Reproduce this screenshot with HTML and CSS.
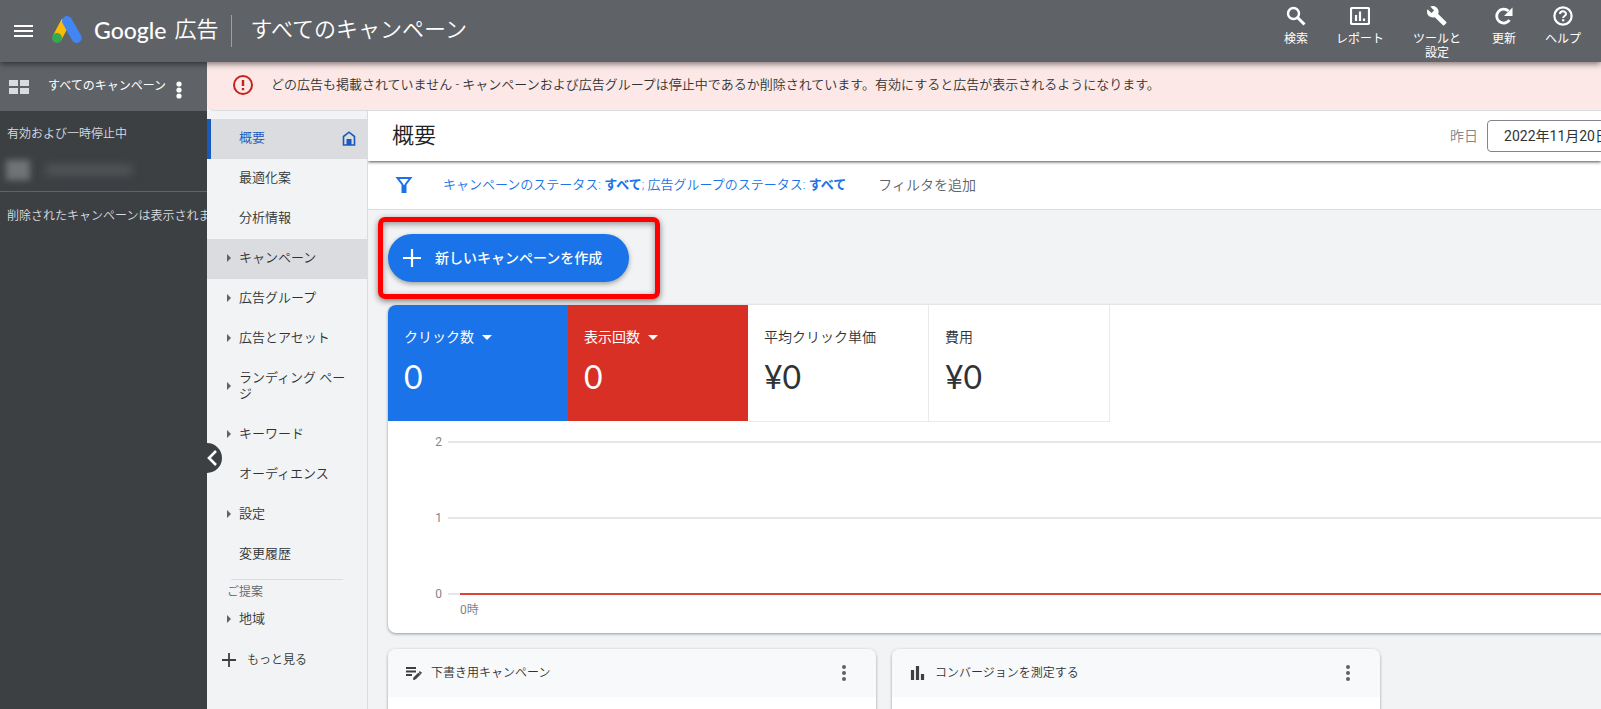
FILE: index.html
```html
<!DOCTYPE html>
<html lang="ja">
<head>
<meta charset="utf-8">
<title>概要 - Google 広告</title>
<link rel="stylesheet" href="styles.css">
</head>
<body>
<header class="topbar">
  <button class="icon-btn menu-btn" aria-label="メニュー"><svg width="20" height="14" viewBox="0 0 20 14"><path d="M0 2h19M0 7h19M0 12h19" stroke="#fff" stroke-width="2"/></svg></button>
  <svg class="logo" width="30" height="28" viewBox="0 0 30 28" aria-hidden="true"><path d="M14 5 5 22" stroke="#fbbc04" stroke-width="9.500"/><path d="M15 5l9.700 17" stroke="#4285f4" stroke-width="10" stroke-linecap="round"/><circle cx="5" cy="22" r="5" fill="#34a853"/></svg>
  <div class="brand"><span class="brand-name">Google</span><span>広告</span></div>
  <div class="scope">すべてのキャンペーン</div>
  <nav class="tools">
    <button class="tool"><svg width="20" height="20" viewBox="0 0 20 20"><circle cx="7.500" cy="7.500" r="5.500" fill="none" stroke="#fff" stroke-width="2.400"/><path d="m11.500 11.500 7 7" stroke="#fff" stroke-width="3"/></svg><span>検索</span></button>
    <button class="tool report"><svg width="20" height="20" viewBox="0 0 20 20"><rect x="1" y="2" width="18" height="16" rx="1" fill="none" stroke="#fff" stroke-width="2.200"/><path d="M6 9v6M10 5.500V15M14 12.500V15" stroke="#fff" stroke-width="2.200"/></svg><span>レポート</span></button>
    <button class="tool wrench"><svg width="24" height="22" viewBox="1 1 22.500 22.500"><path fill="#fff" d="m22.700 19-9.100-9.100c.9-2.300.4-5-1.500-6.900-2-2-5-2.400-7.400-1.300L9 6 6 9 1.600 4.700C.4 7.100.9 10.100 2.900 12.100c1.900 1.900 4.600 2.400 6.900 1.500l9.100 9.100c.4.4 1 .4 1.400 0l2.300-2.300c.5-.4.5-1.100.1-1.400z"/></svg><span>ツールと<br>設定</span></button>
    <button class="tool refresh"><svg width="20" height="20" viewBox="0 0 20 20"><path d="M15.500 14A7 7 0 1 1 14.500 5" fill="none" stroke="#fff" stroke-width="2.800"/><path d="M18.500 1.500v8.500H10z" fill="#fff"/></svg><span>更新</span></button>
    <button class="tool help"><svg width="22" height="22" viewBox="0 0 22 22"><circle cx="11" cy="11" r="9.500" fill="none" stroke="#fff" stroke-width="2.400"/><path d="M7.700 8.800c0-4 6.600-4 6.600 0 0 2.200-3.200 2.300-3.200 4.500" fill="none" stroke="#fff" stroke-width="2.200"/><rect x="10" y="14.500" width="2.400" height="2.400" fill="#fff"/></svg><span>ヘルプ</span></button>
  </nav>
</header>
<div class="shell">
  <aside class="campaigns">
    <div class="campaigns-head">
      <svg width="20" height="14" viewBox="0 0 20 14" aria-hidden="true"><path fill="#dadce0" d="M0 0h9v6H0zM11 0h9v6h-9zM0 8h9v6H0zM11 8h9v6h-9z"/></svg>
      <span>すべてのキャンペーン</span>
      <button class="icon-btn" aria-label="その他"><svg width="6" height="18" viewBox="0 0 6 18"><g fill="#fff"><circle cx="3" cy="3" r="2.600"/><circle cx="3" cy="9" r="2.600"/><circle cx="3" cy="15" r="2.600"/></g></svg></button>
    </div>
    <div class="status">有効および一時停止中</div>
    <div class="masked"><i class="mask-icon"></i><i class="mask-name"></i></div>
    <div class="removed">削除されたキャンペーンは表示されません</div>
    <button class="collapse" aria-label="折りたたむ"><svg width="12" height="18" viewBox="0 0 12 18"><path d="M10 2 3 9l7 7" fill="none" stroke="#fff" stroke-width="2.600"/></svg></button>
  </aside>
  <div class="workspace">
    <div class="alert" role="alert">
      <svg width="22" height="22" viewBox="0 0 22 22" aria-hidden="true"><circle cx="11" cy="11" r="9" fill="none" stroke="#c5221f" stroke-width="2"/><path d="M11 6v6M11 14v2.300" stroke="#c5221f" stroke-width="2.400"/></svg>
      <span>どの広告も掲載されていません - キャンペーンおよび広告グループは停止中であるか削除されています。有効にすると広告が表示されるようになります。</span>
    </div>
    <div class="columns">
      <nav class="sidenav">
        <a class="item active" href="#">概要<svg width="14" height="15" viewBox="0 0 14 15" aria-hidden="true"><path d="M1.500 14V5.500L7 1.200l5.500 4.300V14z" fill="none" stroke="#185abc" stroke-width="1.600"/><path d="M4.500 8h5v6h-5z" fill="#185abc"/></svg></a>
        <a class="item" href="#">最適化案</a>
        <a class="item" href="#">分析情報</a>
        <a class="item more hover" href="#">キャンペーン</a>
        <a class="item more" href="#">広告グループ</a>
        <a class="item more" href="#">広告とアセット</a>
        <a class="item more" href="#">ランディング ページ</a>
        <a class="item more" href="#">キーワード</a>
        <a class="item" href="#">オーディエンス</a>
        <a class="item more" href="#">設定</a>
        <a class="item" href="#">変更履歴</a>
        <div class="suggest">ご提案</div>
        <a class="item more compact" href="#">地域</a>
        <button class="see-more"><svg width="14" height="14" viewBox="0 0 14 14" aria-hidden="true"><path d="M7 0v14M0 7h14" stroke="#3c4043" stroke-width="1.800"/></svg><span>もっと見る</span></button>
      </nav>
      <main class="main">
        <div class="page-head">
          <h1>概要</h1>
          <span class="range">昨日</span>
          <button class="date">2022年11月20日</button>
        </div>
        <div class="filters">
          <svg width="18" height="18" viewBox="0 0 18 18" aria-hidden="true"><path d="M2.500 2h13L10.500 8.500V16h-3V8.500z" fill="none" stroke="#1a73e8" stroke-width="2"/><path d="M8 9h2v7H8z" fill="#1a73e8"/></svg>
          <a class="filter" href="#">キャンペーンのステータス: <b>すべて</b>; 広告グループのステータス: <b>すべて</b></a>
          <button class="add-filter">フィルタを追加</button>
        </div>
        <div class="content">
          <div class="highlight">
            <button class="create"><svg width="18" height="18" viewBox="0 0 18 18" aria-hidden="true"><path d="M9 0v18M0 9h18" stroke="#fff" stroke-width="2.200"/></svg><span>新しいキャンペーンを作成</span></button>
          </div>
          <section class="card chart-card">
            <div class="tiles">
              <button class="tile blue"><span class="tile-label caret">クリック数</span><span class="value">0</span></button>
              <button class="tile red"><span class="tile-label caret">表示回数</span><span class="value">0</span></button>
              <button class="tile"><span class="tile-label">平均クリック単価</span><span class="value">¥0</span></button>
              <button class="tile"><span class="tile-label">費用</span><span class="value">¥0</span></button>
            </div>
            <div class="chart">
              <div class="tick"><span>2</span><i></i></div>
              <div class="tick"><span>1</span><i></i></div>
              <div class="tick series"><span>0</span><i></i></div>
              <div class="hour">0時</div>
            </div>
          </section>
          <div class="cards">
            <section class="card">
              <div class="card-head">
                <svg width="18" height="16" viewBox="0 0 18 16" aria-hidden="true"><path d="M1 3h10M1 6.500h10M1 10h6" stroke="#3c4043" stroke-width="1.800"/><path d="m8.500 14.500.500-2 4.500-4.500 1.500 1.500-4.500 4.500zM14.200 7.300l.8-.8 1.500 1.500-.8.8z" fill="#3c4043" stroke="#3c4043"/></svg>
                <h2>下書き用キャンペーン</h2>
                <button class="icon-btn" aria-label="その他"><svg width="6" height="18" viewBox="0 0 6 18"><g fill="#5f6368"><circle cx="3" cy="3" r="2"/><circle cx="3" cy="9" r="2"/><circle cx="3" cy="15" r="2"/></g></svg></button>
              </div>
              <div class="card-body"></div>
            </section>
            <section class="card">
              <div class="card-head">
                <svg width="18" height="16" viewBox="0 0 18 16" aria-hidden="true"><path d="M3.500 5v10M8.500 1v14M13.500 9v6" stroke="#3c4043" stroke-width="3.200"/></svg>
                <h2>コンバージョンを測定する</h2>
                <button class="icon-btn" aria-label="その他"><svg width="6" height="18" viewBox="0 0 6 18"><g fill="#5f6368"><circle cx="3" cy="3" r="2"/><circle cx="3" cy="9" r="2"/><circle cx="3" cy="15" r="2"/></g></svg></button>
              </div>
              <div class="card-body"></div>
            </section>
          </div>
        </div>
      </main>
    </div>
  </div>
</div>
</body>
</html>
```
FILE: styles.css
```css
* { box-sizing: border-box; }
body {
  margin: 0;
  height: 100vh;
  display: flex;
  flex-direction: column;
  overflow: hidden;
  font: 350 13px/16px Roboto, "Noto Sans CJK JP", sans-serif;
  color: #303336;
  background: #f1f3f4;
}
button { font: inherit; color: inherit; background: none; border: 0; padding: 0; cursor: pointer; }
a { color: inherit; text-decoration: none; }
svg { flex: none; display: block; }
h1, h2 { margin: 0; font-weight: 350; }

.topbar {
  flex: none;
  height: 62px;
  display: flex;
  align-items: center;
  padding: 0 20px 0 14px;
  background: #5f6368;
  color: #fff;
  box-shadow: 0 2px 6px rgba(0, 0, 0, .5);
  z-index: 2;
}
.menu-btn { margin-right: 18px; }
.logo { margin-bottom: 3px; }
.brand {
  display: flex;
  gap: 8px;
  align-items: center;
  height: 32px;
  margin-left: 12px;
  padding-right: 13px;
  border-right: 1px solid #9aa0a6;
  font-size: 22px;
}
.brand span { padding-bottom: 3px; }
.brand-name { font-family: Lato, sans-serif; font-size: 23px; font-weight: 500; }
.scope { margin-left: 18px; padding-bottom: 3px; font-size: 22px; line-height: 32px; white-space: nowrap; }
.tools { margin-left: auto; height: 62px; display: flex; align-items: flex-start; gap: 26px; font-size: 12px; line-height: 14px; font-weight: 400; }
.tool { display: flex; flex-direction: column; align-items: center; gap: 6px; padding-top: 6px; white-space: nowrap; }
.tool svg { height: 20px; }
.tool.report { margin-left: 2px; }
.tool.wrench { margin-left: 3px; }
.tool.refresh { margin-left: 5px; }
.tool.help { margin-left: 3px; }

.shell { flex: 1; display: flex; min-height: 0; }
.campaigns { position: relative; flex: none; width: 207px; background: #3c4043; color: #dadce0; font-size: 12px; z-index: 1; }
.campaigns-head { height: 49px; display: flex; align-items: center; padding: 0 25px 0 9px; background: #5f6368; color: #fff; font-weight: 400; }
.campaigns-head span { margin-left: 19px; padding-bottom: 2px; white-space: nowrap; }
.campaigns-head button { margin: 6px 0 0 auto; }
.status { padding: 15px 7px; }
.masked { display: flex; align-items: center; gap: 16px; height: 35px; padding: 0 6px 8px; border-bottom: 1px solid #5f6368; }
.mask-icon { width: 24px; height: 20px; background: #707375; filter: blur(3px); }
.mask-name { width: 86px; height: 10px; background: #535659; filter: blur(4px); }
.removed { padding: 16px 0 0 7px; white-space: nowrap; overflow: hidden; }
.collapse { position: absolute; top: 381px; right: -15px; width: 30px; height: 30px; border-radius: 50%; background: #3c4043; display: flex; align-items: center; justify-content: flex-end; padding-right: 4px; }

.workspace { flex: 1; min-width: 0; display: flex; flex-direction: column; }
.alert { flex: none; height: 49px; display: flex; align-items: center; gap: 17px; padding: 0 25px 2px; background: #fce8e6; border-bottom: 1px solid #dadce0; border-bottom-left-radius: 8px; white-space: nowrap; }
.columns { flex: 1; min-height: 0; display: flex; }

.sidenav { flex: none; width: 161px; padding-top: 8px; border-right: 1px solid #dadce0; }
.item { display: flex; align-items: center; position: relative; padding: 11px 11px 13px 32px; }
.item.active { background: #dadce0; color: #185abc; border-left: 4px solid #185abc; padding-left: 28px; }
.item.active svg { margin-left: auto; }
.hover { background: #dadce0; }
.item.more { padding-left: 20px; }
.more::before { content: ""; flex: none; margin-right: 8px; border: 4px solid transparent; border-left-color: #5f6368; border-right: 0; }
.suggest { margin: 4px 24px 0; padding-top: 4px; border-top: 1px solid #dadce0; font-size: 12px; color: #5f6368; text-indent: -4px; }
.see-more { display: flex; gap: 11px; padding: 12px 15px; font-size: 12px; align-items: center; }

.main { flex: 1; min-width: 0; overflow: hidden; }
.page-head { position: relative; height: 50px; display: flex; align-items: center; padding: 0 0 1px 24px; background: #fff; box-shadow: 0 1px 3px rgba(0, 0, 0, .7); }
h1 { font-size: 22px; line-height: 32px; color: #202124; }
.range { margin-left: auto; font-size: 14px; color: #80868b; }
.date { flex: none; margin: 0 -25px 0 9px; height: 32px; padding: 0 16px; border: 1px solid #80868b; border-radius: 4px; font-size: 14px; font-weight: 400; white-space: nowrap; }
.filters { height: 49px; display: flex; align-items: center; padding: 0 0 1px 27px; background: #fff; border-bottom: 1px solid #dadce0; white-space: nowrap; }
.filter { margin-left: 30px; color: #1a73e8; }
.filter b { font-weight: 700; }
.add-filter { margin-left: 32px; font-size: 14px; color: #5f6368; }

.content { padding: 7px 0 0 10px; }
.highlight { width: 282px; height: 82px; padding: 12px 5px; border: 5px solid #f00; border-radius: 7px; box-shadow: 0 2px 6px rgba(0, 0, 0, .5), inset 0 2px 6px rgba(0, 0, 0, .4); }
.create { height: 48px; display: flex; align-items: center; gap: 14px; padding: 0 27px 0 15px; border-radius: 24px; background: #1a73e8; color: #fff; font-size: 14px; font-weight: 500; box-shadow: 0 2px 5px rgba(0, 0, 0, .35); white-space: nowrap; }
.card { border-radius: 8px; background: #fff; box-shadow: 0 1px 3px rgba(60, 64, 67, .5); overflow: hidden; }
.chart-card { margin: 6px -16px 16px 10px; padding-bottom: 17px; }
.tiles { display: grid; grid-template-columns: 180px 180px 181px 181px; }
.tile { height: 117px; display: flex; flex-direction: column; align-items: flex-start; padding: 24px 16px; gap: 16px; border-right: 1px solid #e8eaed; border-bottom: 1px solid #e8eaed; font-size: 14px; text-align: left; }
.tile.blue, .tile.red { height: 116px; border: 0; color: #fff; font-weight: 400; }
.blue { background: #1a73e8; }
.red { background: #d93025; }
.caret { display: flex; align-items: center; gap: 8px; }
.caret::after { content: ""; border: 5px solid transparent; border-top-color: #fff; border-bottom: 0; }
.value { font: 400 32px/32px Lato, sans-serif; }
.chart { padding: 10px 0 0 42px; color: #80868b; font-size: 12px; font-weight: 400; }
.tick { display: flex; align-items: center; gap: 6px; height: 20px; margin-bottom: 56px; }
.tick span { width: 12px; text-align: right; }
.tick i { flex: 1; height: 2px; background: #e6e6e6; }
.series { margin-bottom: 0; }
.series i { border-left: 12px solid #e6e6e6; background: #db4437; }
.hour { padding-left: 30px; line-height: 12px; }
.cards { display: flex; gap: 16px; margin-left: 10px; }
.cards .card { flex: 0 1 488px; }
.card-head { height: 48px; display: flex; align-items: center; padding: 0 29px 0 17px; background: #f8f9fa; }
.card-head h2 { margin-left: 8px; font-size: 12px; }
.card-head button { margin-left: auto; }
.card-body { height: 120px; }
```
